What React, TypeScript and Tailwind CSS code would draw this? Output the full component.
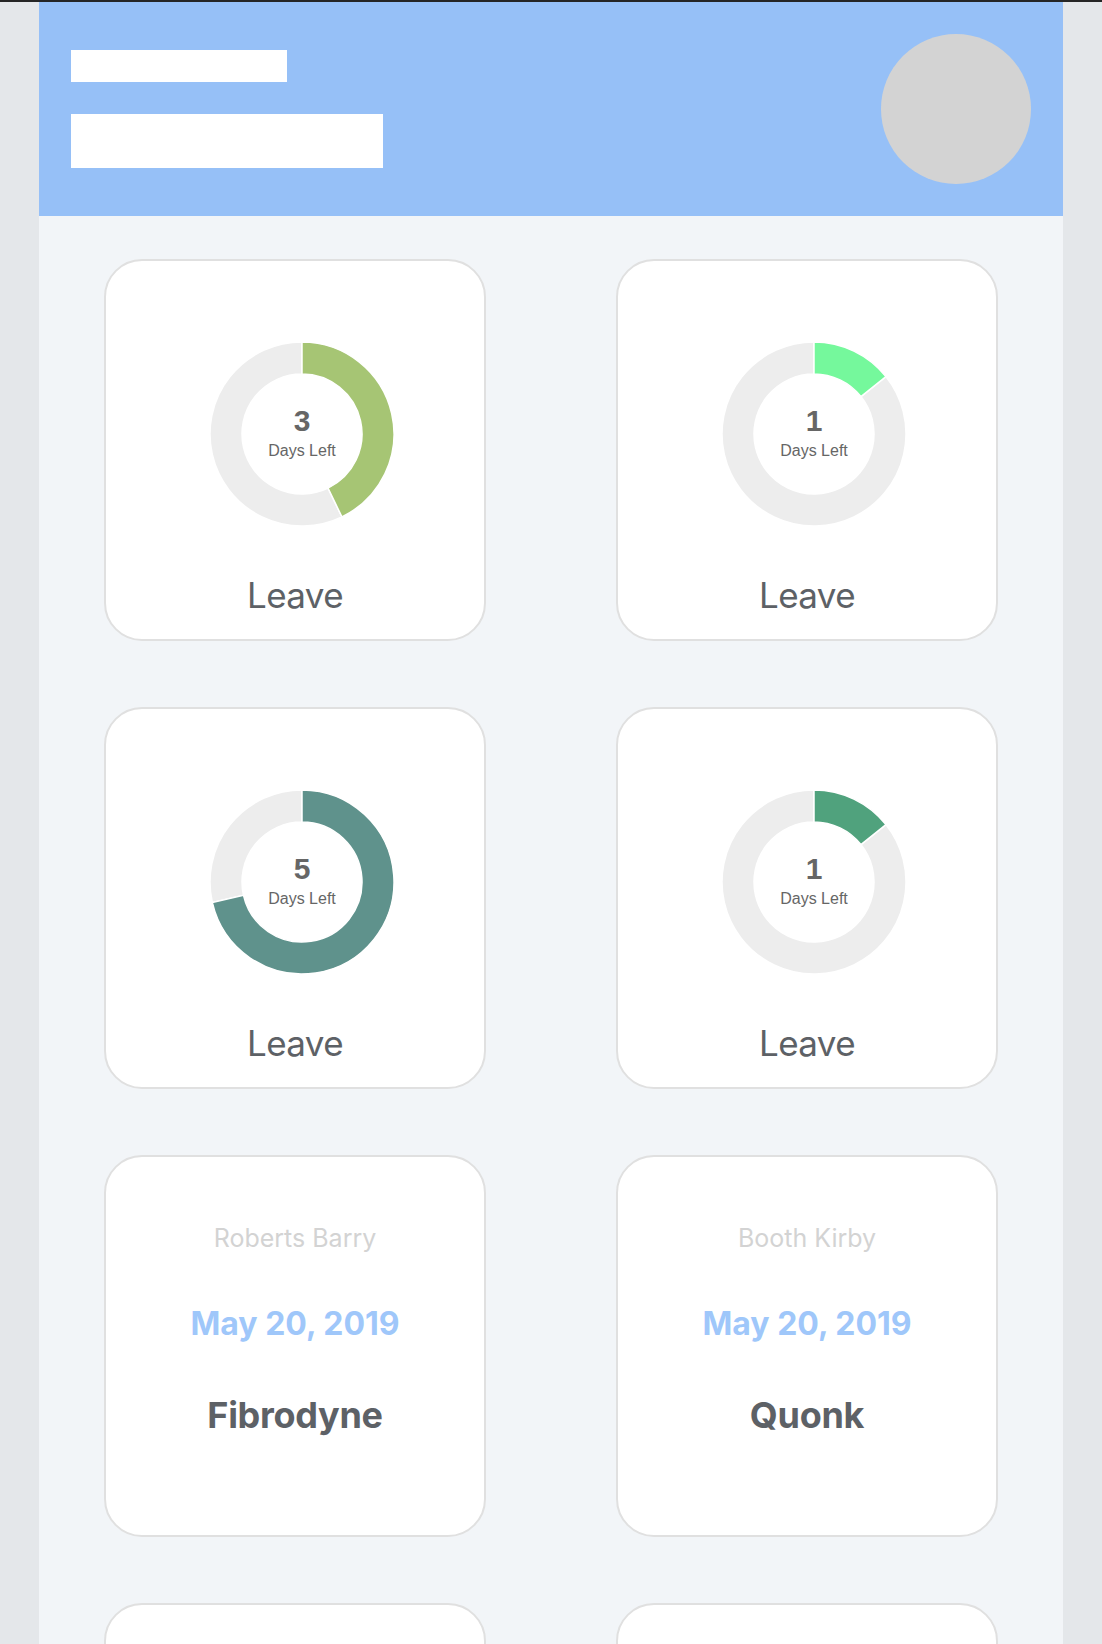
import React from "react";

type Leave = { days: number; color: string };
type Visit = { name: string; date: string; company: string };

const leaves: Leave[] = [
  { days: 3, color: "#a6c574" },
  { days: 1, color: "#75f89c" },
  { days: 5, color: "#5f928c" },
  { days: 1, color: "#50a27d" },
];

const visits: Visit[] = [
  { name: "Roberts Barry", date: "May 20, 2019", company: "Fibrodyne" },
  { name: "Booth Kirby", date: "May 20, 2019", company: "Quonk" },
];

const TOTAL = 7;
const R = 92;
const r = 60;

function pt(angle: number, rad: number) {
  const a = (angle * Math.PI) / 180;
  return [R + rad * Math.sin(a), R - rad * Math.cos(a)];
}

function sector(a0: number, a1: number) {
  const large = a1 - a0 > 180 ? 1 : 0;
  const [x0, y0] = pt(a0, R);
  const [x1, y1] = pt(a1, R);
  const [x2, y2] = pt(a1, r);
  const [x3, y3] = pt(a0, r);
  return `M${x0} ${y0} A${R} ${R} 0 ${large} 1 ${x1} ${y1} L${x2} ${y2} A${r} ${r} 0 ${large} 0 ${x3} ${y3} Z`;
}

function Donut({ days, color }: Leave) {
  const end = (days / TOTAL) * 360;
  return (
    <svg width={184} height={184} viewBox="0 0 184 184" className="ml-[14px]">
      <path d={sector(end, 359.999)} fill="#ededed" stroke="#fff" strokeWidth={1.5} />
      <path d={sector(0, end)} fill={color} stroke="#fff" strokeWidth={1.5} />
      <text
        x={92}
        y={89}
        textAnchor="middle"
        fontFamily="'Liberation Sans', Arial, sans-serif"
        fontWeight={700}
        fontSize={30}
        fill="#666"
      >
        {days}
      </text>
      <text
        x={92}
        y={114}
        textAnchor="middle"
        fontFamily="'Liberation Sans', Arial, sans-serif"
        fontSize={16}
        fill="#666"
      >
        Days Left
      </text>
    </svg>
  );
}

function Card({ children }: { children?: React.ReactNode }) {
  return (
    <div className="w-[382px] h-[382px] rounded-[38px] border-2 border-[#e0e0e0] bg-white flex flex-col items-center">
      {children}
    </div>
  );
}

function LeaveCard(props: Leave) {
  return (
    <Card>
      <div className="mt-[81px]">
        <Donut {...props} />
      </div>
      <div className="mt-[52px] text-[35px] leading-none tracking-[-0.6px] text-[#5d6166]">Leave</div>
    </Card>
  );
}

function VisitCard({ name, date, company }: Visit) {
  return (
    <Card>
      <div className="mt-[69px] text-[25px] leading-none text-[#d3d3d3]">{name}</div>
      <div className="mt-[57px] text-[32px] leading-none font-bold text-[#9fc7fa]">{date}</div>
      <div className="mt-[57px] text-[36px] leading-none font-bold tracking-[-0.3px] text-[#5d6166]">
        {company}
      </div>
    </Card>
  );
}

export default function App() {
  return (
    <div className="min-h-screen bg-[#e4e7ea] font-['Inter',sans-serif]">
      <div className="h-[2px] bg-[#252525]" />
      <div className="mx-auto w-[1024px] bg-[#f2f5f8] pb-16">
        {/* Header */}
        <div className="flex items-center justify-between bg-[#96c0f7] p-8">
          <div className="flex flex-col gap-8">
            <div className="w-[216px] h-[32px] bg-white" />
            <div className="w-[312px] h-[54px] bg-white" />
          </div>
          <div className="w-[150px] h-[150px] rounded-full bg-[#d3d3d3]" />
        </div>

        {/* Cards */}
        <div className="grid grid-cols-2 justify-items-center gap-y-[66px] pt-[43px]">
          {leaves.map((l, i) => (
            <LeaveCard key={i} {...l} />
          ))}
          {visits.map((v, i) => (
            <VisitCard key={i} {...v} />
          ))}
          <Card />
          <Card />
        </div>
      </div>
    </div>
  );
}
